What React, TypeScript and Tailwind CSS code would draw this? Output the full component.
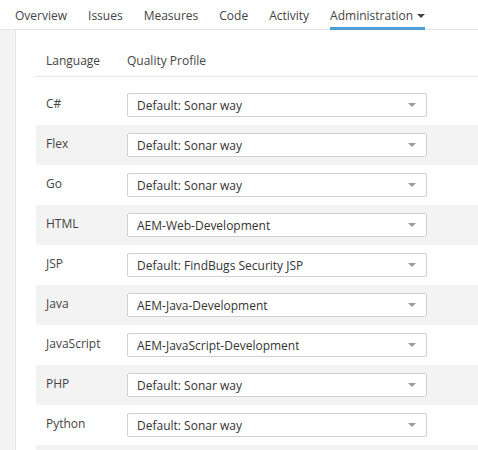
import React from 'react';

const navItems = ['Overview', 'Issues', 'Measures', 'Code', 'Activity'];

const profiles: [string, string][] = [
  ['C#', 'Default: Sonar way'],
  ['Flex', 'Default: Sonar way'],
  ['Go', 'Default: Sonar way'],
  ['HTML', 'AEM-Web-Development'],
  ['JSP', 'Default: FindBugs Security JSP'],
  ['Java', 'AEM-Java-Development'],
  ['JavaScript', 'AEM-JavaScript-Development'],
  ['PHP', 'Default: Sonar way'],
  ['Python', 'Default: Sonar way'],
];

const Caret = ({ className }: { className: string }) => (
  <svg width="8" height="4" viewBox="0 0 8 4" className={className}>
    <path d="M0 0h8L4 4z" fill="currentColor" />
  </svg>
);

export default function App() {
  return (
    <div className="h-[450px] overflow-hidden bg-white text-[12px] text-[#444] font-['Open_Sans',sans-serif]">
      {/* top nav */}
      <nav className="flex h-[30px] gap-[21px] border-b border-[#e6e6e6] pl-[15px]">
        {navItems.map((item) => (
          <div key={item} className="flex h-full items-center pt-[3px]">
            {item}
          </div>
        ))}
        <div className="relative flex h-full items-center gap-[4px] pt-[3px]">
          <span>Administration</span>
          <Caret className="text-[#444]" />
          <div className="absolute bottom-[-1px] left-0 right-0 h-[3px] bg-[#4b9fd5]" />
        </div>
      </nav>

      <div className="flex h-[420px]">
        <div className="w-[16px] shrink-0 border-r border-[#e6e6e6] bg-[#f3f3f3]" />

        <div className="flex-1 pl-[20px] pt-[16px]">
          <div className="flex h-[31px] items-center border-b border-[#e6e6e6] pb-[1px]">
            <div className="w-[91px] pl-[10px]">Language</div>
            <div>Quality Profile</div>
          </div>

          <div className="pt-[8px]">
            {profiles.map(([lang, profile], i) => (
              <div
                key={lang}
                className={`flex h-[40px] items-center ${i % 2 === 1 ? 'bg-[#f3f3f3]' : 'bg-white'}`}
              >
                <div className="w-[91px] pl-[10px] pb-[2px]">{lang}</div>
                <div className="flex h-[24px] w-[300px] items-center justify-between rounded-[2px] border border-[#d0d0d0] bg-white pl-[9px] pr-[10px]">
                  <span className="truncate pt-[1px] text-[#333]">{profile}</span>
                  <Caret className="text-[#999]" />
                </div>
              </div>
            ))}
            <div className="h-[40px] bg-[#f3f3f3]" />
          </div>
        </div>
      </div>
    </div>
  );
}
